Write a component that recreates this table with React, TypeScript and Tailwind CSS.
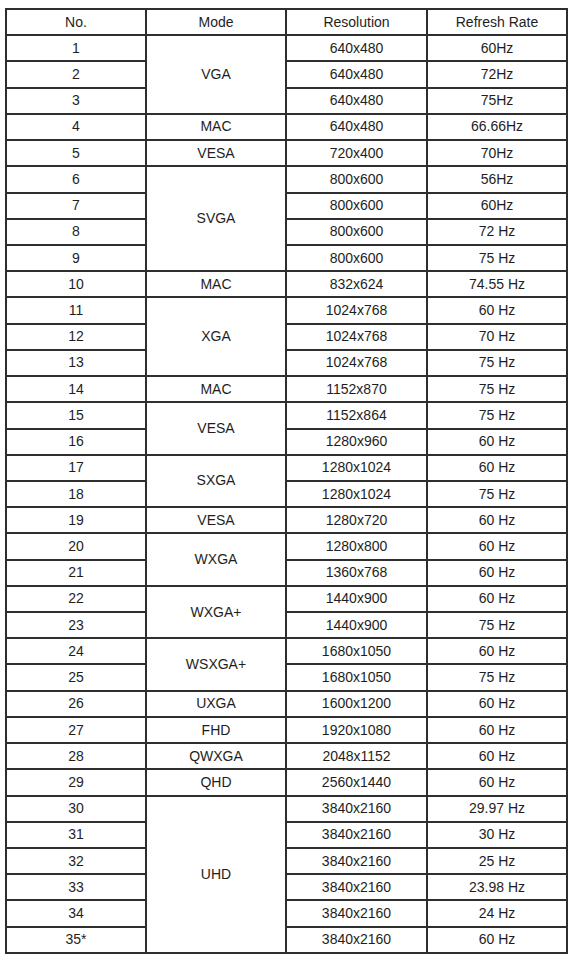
import React from 'react';

interface Row {
  no: string;
  mode?: string;
  span?: number;
  res: string;
  rate: string;
}

const rows: Row[] = [
  { no: '1', mode: 'VGA', span: 3, res: '640x480', rate: '60Hz' },
  { no: '2', res: '640x480', rate: '72Hz' },
  { no: '3', res: '640x480', rate: '75Hz' },
  { no: '4', mode: 'MAC', span: 1, res: '640x480', rate: '66.66Hz' },
  { no: '5', mode: 'VESA', span: 1, res: '720x400', rate: '70Hz' },
  { no: '6', mode: 'SVGA', span: 4, res: '800x600', rate: '56Hz' },
  { no: '7', res: '800x600', rate: '60Hz' },
  { no: '8', res: '800x600', rate: '72 Hz' },
  { no: '9', res: '800x600', rate: '75 Hz' },
  { no: '10', mode: 'MAC', span: 1, res: '832x624', rate: '74.55 Hz' },
  { no: '11', mode: 'XGA', span: 3, res: '1024x768', rate: '60 Hz' },
  { no: '12', res: '1024x768', rate: '70 Hz' },
  { no: '13', res: '1024x768', rate: '75 Hz' },
  { no: '14', mode: 'MAC', span: 1, res: '1152x870', rate: '75 Hz' },
  { no: '15', mode: 'VESA', span: 2, res: '1152x864', rate: '75 Hz' },
  { no: '16', res: '1280x960', rate: '60 Hz' },
  { no: '17', mode: 'SXGA', span: 2, res: '1280x1024', rate: '60 Hz' },
  { no: '18', res: '1280x1024', rate: '75 Hz' },
  { no: '19', mode: 'VESA', span: 1, res: '1280x720', rate: '60 Hz' },
  { no: '20', mode: 'WXGA', span: 2, res: '1280x800', rate: '60 Hz' },
  { no: '21', res: '1360x768', rate: '60 Hz' },
  { no: '22', mode: 'WXGA+', span: 2, res: '1440x900', rate: '60 Hz' },
  { no: '23', res: '1440x900', rate: '75 Hz' },
  { no: '24', mode: 'WSXGA+', span: 2, res: '1680x1050', rate: '60 Hz' },
  { no: '25', res: '1680x1050', rate: '75 Hz' },
  { no: '26', mode: 'UXGA', span: 1, res: '1600x1200', rate: '60 Hz' },
  { no: '27', mode: 'FHD', span: 1, res: '1920x1080', rate: '60 Hz' },
  { no: '28', mode: 'QWXGA', span: 1, res: '2048x1152', rate: '60 Hz' },
  { no: '29', mode: 'QHD', span: 1, res: '2560x1440', rate: '60 Hz' },
  { no: '30', mode: 'UHD', span: 6, res: '3840x2160', rate: '29.97 Hz' },
  { no: '31', res: '3840x2160', rate: '30 Hz' },
  { no: '32', res: '3840x2160', rate: '25 Hz' },
  { no: '33', res: '3840x2160', rate: '23.98 Hz' },
  { no: '34', res: '3840x2160', rate: '24 Hz' },
  { no: '35*', res: '3840x2160', rate: '60 Hz' },
];

const cell = 'border-2 border-[#2e2e2e] p-0 text-center align-middle';

export default function App() {
  return (
    <div className="min-h-screen bg-white pl-[5px] pt-[8px] font-['Liberation_Sans',Arial,sans-serif] text-[14px] text-[#1e1e1e]">
      <table className="w-[561px] table-fixed border-collapse">
        <colgroup>
          <col className="w-[140px]" />
          <col className="w-[140px]" />
          <col className="w-[141px]" />
          <col className="w-[140px]" />
        </colgroup>
        <thead>
          <tr className="h-[26.22px]">
            <th className={cell + ' font-normal'}>No.</th>
            <th className={cell + ' font-normal'}>Mode</th>
            <th className={cell + ' font-normal'}>Resolution</th>
            <th className={cell + ' font-normal'}>Refresh Rate</th>
          </tr>
        </thead>
        <tbody>
          {rows.map((r) => (
            <tr key={r.no} className="h-[26.22px]">
              <td className={cell}>{r.no}</td>
              {r.mode && (
                <td className={cell} rowSpan={r.span}>
                  {r.mode}
                </td>
              )}
              <td className={cell}>{r.res}</td>
              <td className={cell}>{r.rate}</td>
            </tr>
          ))}
        </tbody>
      </table>
    </div>
  );
}
